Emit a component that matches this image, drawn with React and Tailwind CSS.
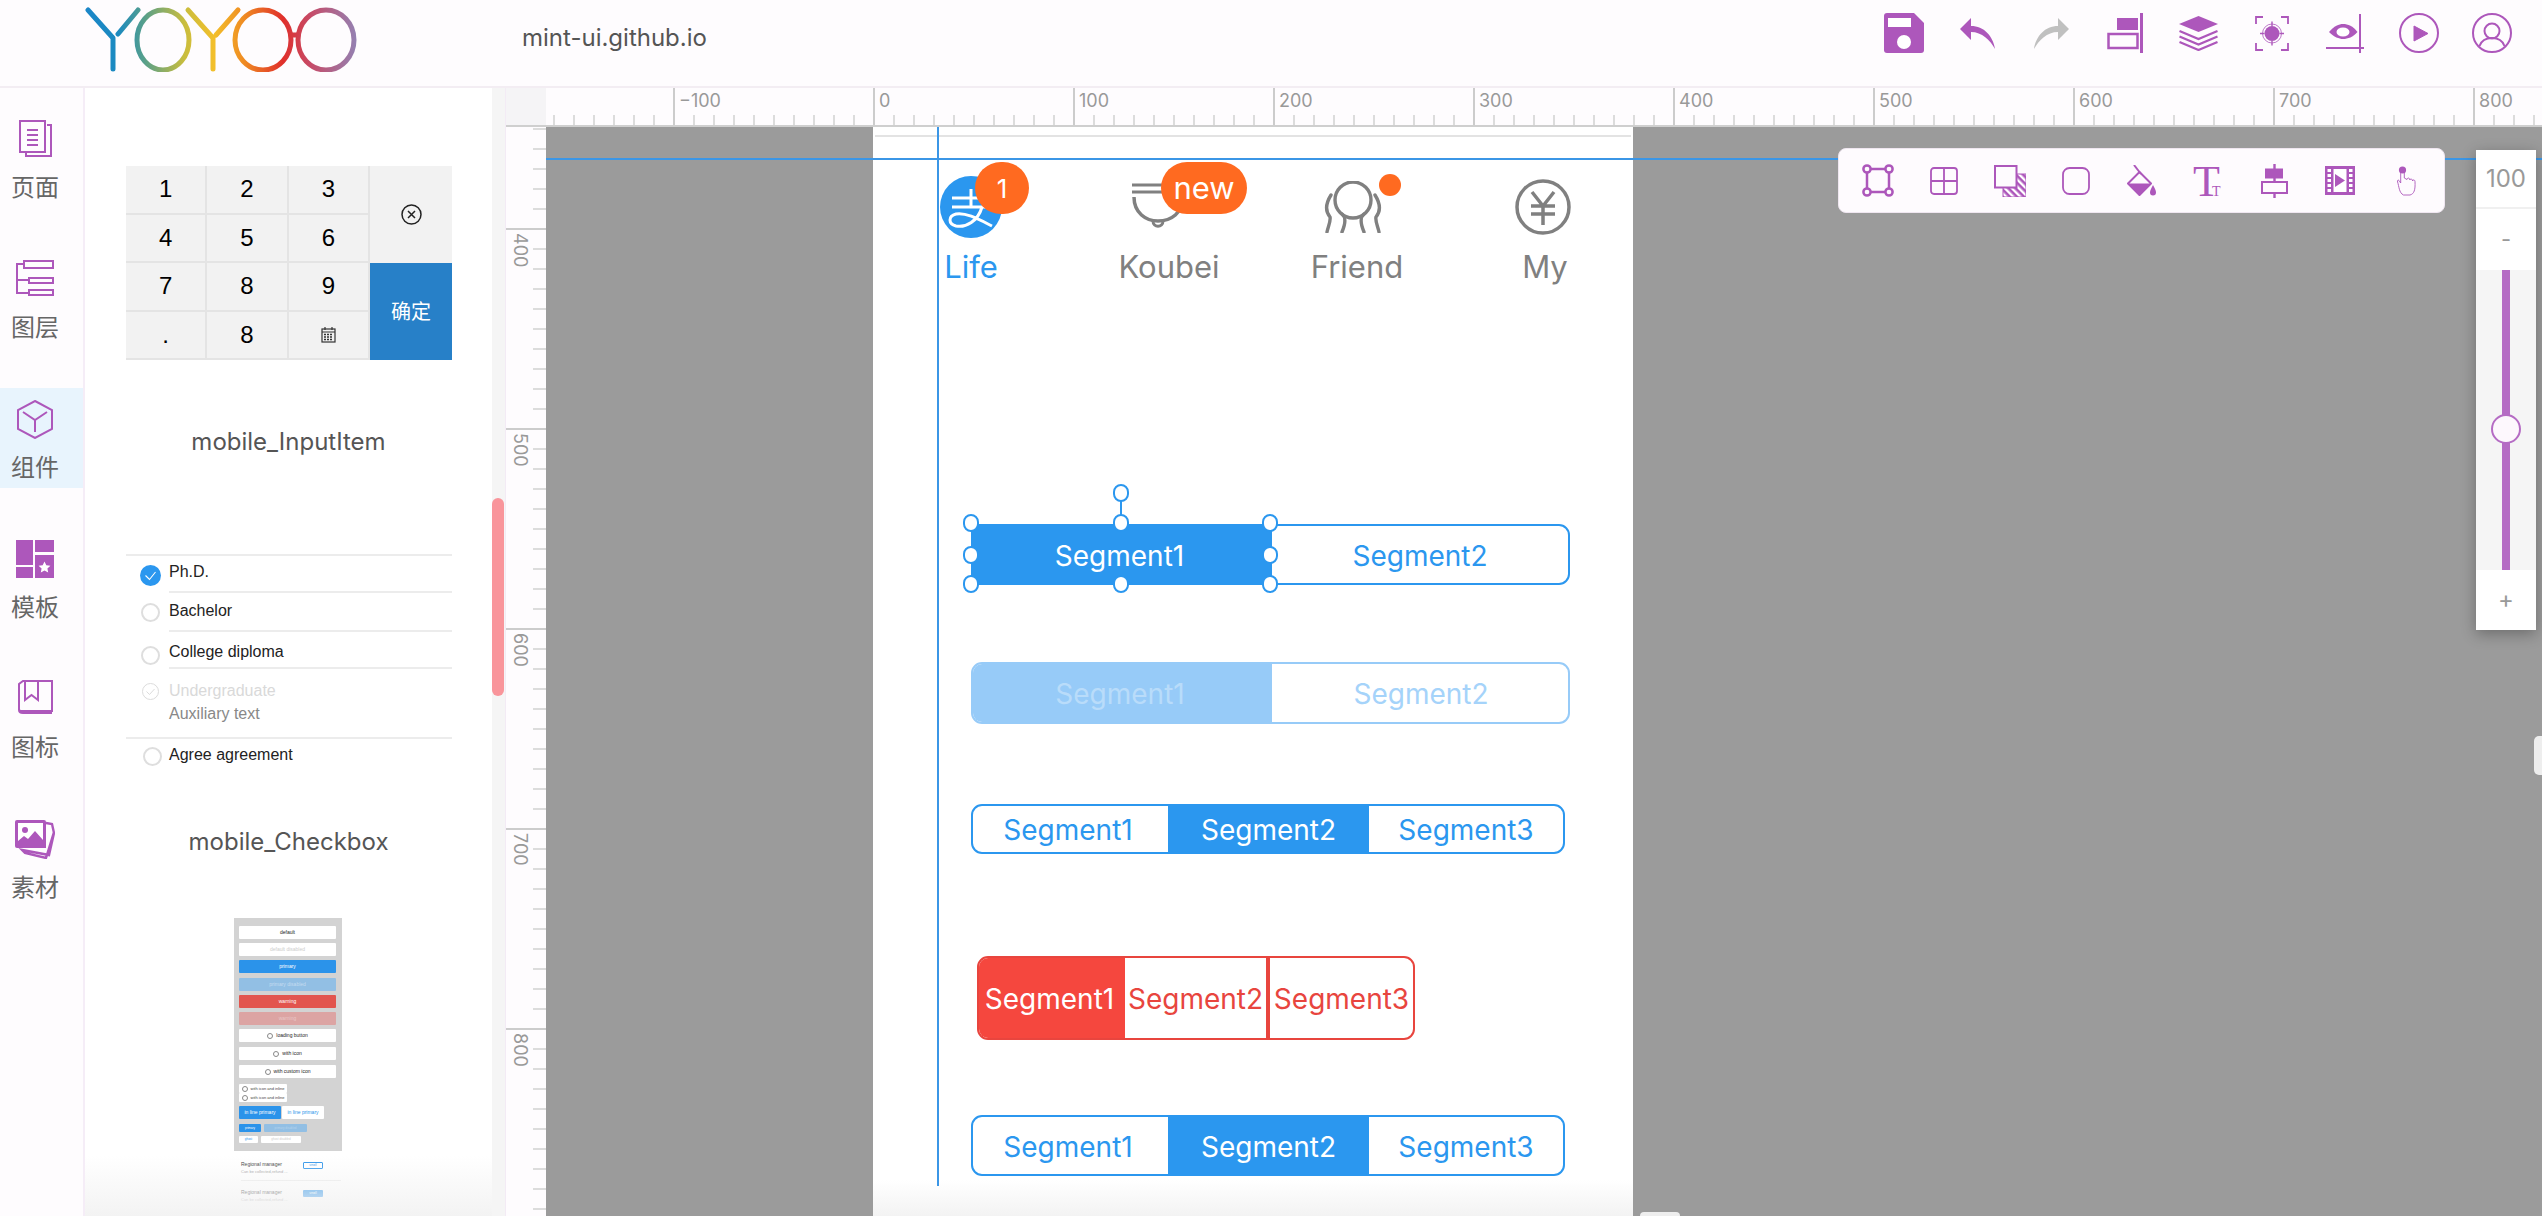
import React from "react";

const P = "#ad57bb";

function Logo() {
  return (
    <svg width="275" height="70" viewBox="0 0 275 70" fill="none" className="block">
      <defs>
        <linearGradient id="lg" gradientUnits="userSpaceOnUse" x1="0" y1="0" x2="275" y2="0">
          <stop offset="0" stopColor="#1b86c8" />
          <stop offset="0.12" stopColor="#1b8ac0" />
          <stop offset="0.22" stopColor="#5aa088" />
          <stop offset="0.36" stopColor="#c8bd3e" />
          <stop offset="0.47" stopColor="#f3bf2b" />
          <stop offset="0.58" stopColor="#ef8a22" />
          <stop offset="0.72" stopColor="#e02f2b" />
          <stop offset="0.82" stopColor="#c64b68" />
          <stop offset="1" stopColor="#9085b8" />
        </linearGradient>
      </defs>
      <g stroke="url(#lg)" strokeWidth="5" strokeLinecap="round" strokeLinejoin="round">
        <path d="M3 8 L28 36 V67 M53 8 L33 32" />
        <ellipse cx="78" cy="38" rx="26" ry="30" />
        <path d="M103 8 L128 36 V67 M153 8 L131 33" />
        <ellipse cx="178" cy="38" rx="28" ry="30" />
        <ellipse cx="241" cy="38" rx="28" ry="30" />
        <path d="M206 33 H213" />
      </g>
    </svg>
  );
}

const Save = () => (
  <svg width="40" height="40" viewBox="0 0 40 40">
    <path d="M3 0H30L40 10V37A3 3 0 0 1 37 40H3A3 3 0 0 1 0 37V3A3 3 0 0 1 3 0Z" fill={P} />
    <rect x="4" y="5" width="23" height="9" fill="#fff" />
    <circle cx="20" cy="29" r="7" fill="#fff" />
  </svg>
);
const Undo = ({ c = P, flip = false }) => (
  <svg width="35" height="31" viewBox="0 0 35 31" className={flip ? "-scale-x-100" : ""}>
    <path d="M0 11L11 0V8C24 8 33 18 35 31C30 22 22 14 11 14V22Z" fill={c} />
  </svg>
);
const AlignR = () => (
  <svg width="36" height="40" viewBox="0 0 36 40" fill="none">
    <rect x="10" y="5" width="21" height="12" fill={P} />
    <rect x="1.5" y="21" width="29" height="14" stroke={P} strokeWidth="2.5" />
    <path d="M34.5 0V40" stroke={P} strokeWidth="3" />
  </svg>
);
const Layers = () => (
  <svg width="39" height="35" viewBox="0 0 39 35" fill="none">
    <path d="M0 8L19.5 0L39 8L19.5 16Z" fill={P} />
    <path d="M0.5 15L19.5 23L38.5 15M0.5 20.5L19.5 28.5L38.5 20.5M0.5 26L19.5 34L38.5 26" stroke={P} strokeWidth="2.2" />
  </svg>
);
const Focus = () => (
  <svg width="34" height="35" viewBox="0 0 34 35" fill="none" stroke={P} strokeWidth="1.8">
    <path d="M1 8V1H8M26 1H33V8M1 27V34H8M26 34H33V27" />
    <circle cx="17" cy="17.5" r="7.5" fill={P} stroke="none" />
    <circle cx="17" cy="17.5" r="9.5" strokeWidth="0.8" />
    <path d="M17 5.5V10M17 25V29.5M5 17.5H9.5M24.5 17.5H29" strokeWidth="1.4" />
  </svg>
);
const EyeAxis = () => (
  <svg width="38" height="39" viewBox="0 0 38 39" fill="none">
    <path d="M34 0V39M0 34H38" stroke={P} strokeWidth="2" />
    <path d="M3 18C8 12 13 10 17 10C22 10 27 12 31.5 18C27 23 22 25 17 25C13 25 8 23 3 18Z" fill={P} />
    <ellipse cx="17" cy="18" rx="6.5" ry="4.5" fill="#fff" />
  </svg>
);
const PlayC = () => (
  <svg width="40" height="40" viewBox="0 0 40 40" fill="none">
    <circle cx="20" cy="20" r="19" stroke={P} strokeWidth="2" />
    <path d="M15 13V28L29 20.5Z" fill={P} stroke={P} strokeLinejoin="round" />
  </svg>
);
const UserC = () => (
  <svg width="40" height="40" viewBox="0 0 40 40" fill="none" stroke={P} strokeWidth="2">
    <circle cx="20" cy="20" r="19" />
    <circle cx="20" cy="18" r="7.5" />
    <path d="M7.5 33C9.5 27.5 14 25 20 25C26 25 30.5 27.5 32.5 33" />
  </svg>
);

const TShape = () => (
  <svg width="32" height="33" viewBox="0 0 32 33" fill="none" stroke={P} strokeWidth="2.5">
    <rect x="5" y="5" width="22" height="23" />
    {[[5, 5], [27, 5], [5, 28], [27, 28]].map(([x, y]) => (
      <circle key={x + "-" + y} cx={x} cy={y} r="3.6" fill="#fefbfe" />
    ))}
  </svg>
);
const TGrid = () => (
  <svg width="28" height="28" viewBox="0 0 28 28" fill="none" stroke={P} strokeWidth="1.8">
    <rect x="1" y="1" width="26" height="26" rx="3" />
    <path d="M14 1V27M1 14H27" />
  </svg>
);
const TOver = () => (
  <svg width="32" height="32" viewBox="0 0 32 32" fill="none">
    <defs>
      <pattern id="ht" width="5" height="5" patternUnits="userSpaceOnUse" patternTransform="rotate(45)">
        <rect width="5" height="5" fill="#fff" />
        <rect width="5" height="2.6" fill={P} />
      </pattern>
    </defs>
    <rect x="9" y="9" width="23" height="23" fill="url(#ht)" stroke={P} strokeWidth="1" />
    <rect x="1" y="1" width="21.5" height="21.5" fill="#fefbfe" stroke={P} strokeWidth="2" />
  </svg>
);
const TRound = () => (
  <svg width="28" height="28" viewBox="0 0 28 28" fill="none" stroke={P} strokeWidth="1.8">
    <rect x="1" y="1" width="26" height="26" rx="6.5" />
  </svg>
);
const TFill = () => (
  <svg width="30" height="31" viewBox="0 0 30 31" fill="none">
    <path d="M7 0L14 9" stroke={P} strokeWidth="2" />
    <path d="M12.5 7L24 18.5L12.5 30L1 18.5Z" stroke={P} strokeWidth="2" strokeLinejoin="round" />
    <path d="M1 18.5H24L12.5 30Z" fill={P} />
    <path d="M26 20C24 24 23 25.5 23 27.5A3 3 0 0 0 29 27.5C29 25.5 28 24 26 20Z" fill={P} />
  </svg>
);
const TText = () => (
  <svg width="30" height="50" viewBox="0 0 30 50">
    <text x="0" y="40" fontFamily="Liberation Serif" fontSize="44" fill={P}>T</text>
    <text x="19" y="40" fontFamily="Liberation Serif" fontSize="14" fill={P}>T</text>
  </svg>
);
const TAlign = () => (
  <svg width="27" height="34" viewBox="0 0 27 34" fill="none">
    <path d="M13.5 0V34" stroke={P} strokeWidth="2.4" />
    <rect x="4" y="4.5" width="18" height="10" fill={P} />
    <rect x="1" y="18" width="25" height="11" fill="#fefbfe" stroke={P} strokeWidth="2" />
  </svg>
);
const TFilm = () => (
  <svg width="30" height="29" viewBox="0 0 30 29">
    <rect width="30" height="29" fill={P} />
    <rect x="8.5" y="3" width="13" height="23" fill="#fff" />
    {[4, 9, 14, 19, 24].map((y) => (
      <g key={y}>
        <rect x="2.5" y={y - 1} width="3.5" height="3" fill="#fff" />
        <rect x="24" y={y - 1} width="3.5" height="3" fill="#fff" />
      </g>
    ))}
    <path d="M10 8V21L20 14.5Z" fill={P} />
  </svg>
);
const THand = () => (
  <svg width="19" height="30" viewBox="0 0 19 30" fill="none" stroke={P} strokeWidth="0.9">
    <circle cx="5.5" cy="4" r="3.6" fill={P} stroke="none" />
    <path d="M3.7 5V17L2 14.5C1 13.5 0 14.5 0.6 16C2 20 2 27 6.5 29H13C17 28 18.5 24 18 15.5C17.8 13.5 15.8 13.5 15.6 15C15.5 12.5 13 12.5 12.9 14C12.7 11.5 10.2 11.5 10 13.5L7.3 12V5" />
  </svg>
);

const IPage = () => (
  <svg width="33" height="37" viewBox="0 0 33 37" fill="none" stroke={P} strokeWidth="2">
    <rect x="1" y="1" width="25" height="31" />
    <path d="M28 5H32V36H7V32" />
    <path d="M8 10H19M8 15H19M8 20H19M8 25H19" />
  </svg>
);
const ILayer = () => (
  <svg width="38" height="37" viewBox="0 0 38 37" fill="none" stroke={P} strokeWidth="2">
    <rect x="8" y="1" width="29" height="7" />
    <rect x="13" y="18" width="24" height="5" />
    <rect x="13" y="30" width="24" height="5" />
    <path d="M8 4H1V33H13M1 20H13" />
  </svg>
);
const ICube = () => (
  <svg width="36" height="39" viewBox="0 0 36 39" fill="none" stroke={P} strokeWidth="2">
    <path d="M18 1L35 10V29L18 38L1 29V10Z" />
    <path d="M6 12L18 20L30 12M18 20V32" />
  </svg>
);
const ITemplate = () => (
  <svg width="38" height="38" viewBox="0 0 38 38" fill={P}>
    <rect x="0" y="0" width="17" height="25" />
    <rect x="0" y="27" width="17" height="11" />
    <rect x="19" y="0" width="19" height="12" />
    <rect x="19" y="15" width="19" height="23" />
    <path d="M28.5 21.5L30.3 25.3L34.4 25.8L31.4 28.6L32.2 32.6L28.5 30.6L24.8 32.6L25.6 28.6L22.6 25.8L26.7 25.3Z" fill="#fff" />
  </svg>
);
const IBook = () => (
  <svg width="35" height="34" viewBox="0 0 35 34" fill="none" stroke={P} strokeWidth="2">
    <path d="M1 30V4L5 1H34V31H5C2.5 31 1 30.5 1 30ZM1 30C1 32.5 3 33 5 33H34" />
    <path d="M7 1V20L13.5 15L20 20V1" />
  </svg>
);
const IAsset = () => (
  <svg width="40" height="39" viewBox="0 0 40 39">
    <path d="M31 3L37 4L39 13L34 35L7 30L10 33L31 38L39 12" fill="none" stroke={P} strokeWidth="2.4" />
    <path d="M2 0H29A2 2 0 0 1 31 2V28H2A2 2 0 0 1 0 26V2A2 2 0 0 1 2 0Z" fill={P} />
    <path d="M3 3H28V20L20 11L13 19L9 16L3 21Z" fill="#fff" />
    <circle cx="10" cy="10" r="3" fill={P} />
  </svg>
);

function RailItem({ icon, label, active }) {
  return (
    <div className={`h-[100px] ${active ? "bg-[#e8f4fd]" : ""}`}>
      <div className="w-[70px] flex flex-col items-center pt-[12px]">
        <div className="h-[39px] flex items-start justify-center">{icon}</div>
        <div className="mt-[14px] text-[24px] leading-[30px] text-[#666]">{label}</div>
      </div>
    </div>
  );
}

function Key({ children }) {
  return (
    <div className="flex items-center justify-center border-r-2 border-b-2 border-[#e4e4e4] text-[24px] text-black font-['Liberation_Sans']">
      {children}
    </div>
  );
}

function Keypad() {
  return (
    <div className="flex ml-[41px] mt-[78px] w-[326px] h-[194px] bg-[#f2f2f2]">
      <div className="w-[244px] grid grid-cols-3 grid-rows-4">
        {["1", "2", "3", "4", "5", "6", "7", "8", "9", ".", "8"].map((k, i) => (
          <Key key={i}>{k}</Key>
        ))}
        <Key>
          <svg width="17" height="17" viewBox="0 0 17 17" fill="none" stroke="#333" strokeWidth="1.2">
            <rect x="2" y="3" width="13" height="13" />
            <path d="M2 6H15M5 1V4M12 1V4" />
            <path d="M4 8.5H13M4 11H13M4 13.5H13" strokeWidth="1.5" strokeDasharray="2 1" />
          </svg>
        </Key>
      </div>
      <div className="flex-1 flex flex-col">
        <div className="h-[97px] flex items-center justify-center">
          <svg width="21" height="21" viewBox="0 0 21 21" fill="none" stroke="#222" strokeWidth="1.5">
            <circle cx="10.5" cy="10.5" r="9.5" />
            <path d="M7 7L14 14M14 7L7 14" />
          </svg>
        </div>
        <div className="h-[97px] bg-[#2780c8] text-white text-[20px] flex items-center justify-center">确定</div>
      </div>
    </div>
  );
}

function Radio({ size, kind }) {
  if (kind === "on")
    return (
      <svg width={size} height={size} viewBox="0 0 21 21" fill="none">
        <circle cx="10.5" cy="10.5" r="10.5" fill="#2b97ef" />
        <path d="M5.5 10.5L9.5 14.5L15.5 7" stroke="#fff" strokeWidth="1.1" />
      </svg>
    );
  if (kind === "dis")
    return (
      <svg width={size} height={size} viewBox="0 0 17 17" fill="none" stroke="#dcdcdc">
        <circle cx="8.5" cy="8.5" r="8" />
        <path d="M4.5 8.5L7.5 11.5L12.5 6" />
      </svg>
    );
  return <div style={{ width: size, height: size }} className="rounded-full border-2 border-[#dedede]" />;
}

function ListRow({ h, circle, text, size, kind, cx = 24, label, dim, last }) {
  return (
    <div style={{ height: h }} className="flex">
      <div className="w-[45px] shrink-0" style={{ paddingTop: circle, paddingLeft: cx - size / 2 }}>
        <Radio size={size} kind={kind} />
      </div>
      <div className={`flex-1 -ml-[2px] ${last ? "" : "border-b-2 border-[#ececec]"}`} style={{ paddingTop: text }}>
        <div className={`text-[16px] leading-[20px] font-['Liberation_Sans'] ${dim ? "text-[#d9d9d9]" : "text-[#222]"}`}>{label}</div>
        {dim && <div className="mt-[3px] text-[16px] leading-[20px] font-['Liberation_Sans'] text-[#888]">Auxiliary text</div>}
      </div>
    </div>
  );
}

function Checklist() {
  return (
    <div className="ml-[41px] w-[326px] mt-[96px]">
      <div className="border-t-2 border-[#ececec]" />
      <ListRow h={37} circle={9} text={6} size={21} kind="on" label="Ph.D." />
      <ListRow h={39} circle={10} text={8} size={19} label="Bachelor" />
      <ListRow h={37} circle={14} text={10} size={19} label="College diploma" />
      <ListRow h={68} circle={14} text={12} size={17} kind="dis" label="Undergraduate" dim last />
      <div className="border-t-2 border-[#ececec]" />
      <ListRow h={38} circle={8} text={6} size={19} cx={26} label="Agree agreement" last />
    </div>
  );
}

function Btn({ w = 97, h = 13, mt = 4, ml = 5, bg = "bg-white", color = "text-[#222]", children }) {
  return (
    <div style={{ width: w, height: h, marginTop: mt, marginLeft: ml }} className={`${bg} ${color} rounded-[1px] text-[5px] leading-none flex items-center justify-center font-['Liberation_Sans'] whitespace-nowrap`}>
      {children}
    </div>
  );
}
const Spin = () => <span className="inline-block w-[6px] h-[6px] rounded-full border border-[#888] mr-[3px]" />;

function Thumb() {
  return (
    <div className="ml-[149px] mt-[60px] w-[108px]">
      <div className="h-[233px] bg-[#d3d3d3] pt-[8px]">
        <Btn mt={0}>default</Btn>
        <Btn color="text-[#ccc]">default disabled</Btn>
        <Btn bg="bg-[#2b93ea]" color="text-white">primary</Btn>
        <Btn bg="bg-[#92bfe4]" color="text-[#c5dcf0]" mt={5}>primary disabled</Btn>
        <Btn bg="bg-[#e2554e]" color="text-white">warning</Btn>
        <Btn bg="bg-[#dca4a3]" color="text-[#e8c6c6]">warning</Btn>
        <Btn><Spin />loading button</Btn>
        <Btn mt={5}><Spin />with icon</Btn>
        <Btn mt={5}><Spin />with custom icon</Btn>
        <Btn w={48} h={9} mt={6} color="text-[#444]"><Spin /><span className="text-[4px]">with icon and inline</span></Btn>
        <Btn w={48} h={9} mt={0} color="text-[#444]"><Spin /><span className="text-[4px]">with icon and inline</span></Btn>
        <div className="flex ml-[5px] mt-[4px] gap-[1px]">
          <Btn w={42} mt={0} ml={0} bg="bg-[#2b93ea]" color="text-white">in line primary</Btn>
          <Btn w={42} mt={0} ml={0} color="text-[#2b93ea]">in line primary</Btn>
        </div>
        <div className="flex ml-[5px] mt-[5px] gap-[3px]">
          <Btn w={22} h={8} mt={0} ml={0} bg="bg-[#2b93ea]" color="text-white"><span className="text-[3px]">primary</span></Btn>
          <Btn w={43} h={8} mt={0} ml={0} bg="bg-[#92bfe4]" color="text-[#b5d3ec]"><span className="text-[3px]">primary disabled</span></Btn>
        </div>
        <div className="flex ml-[5px] mt-[4px] gap-[3px]">
          <Btn w={19} h={7} mt={0} ml={0} color="text-[#2b93ea]"><span className="text-[3px]">ghost</span></Btn>
          <Btn w={40} h={7} mt={0} ml={0} color="text-[#ccc]"><span className="text-[3px]">ghost disabled</span></Btn>
        </div>
      </div>
      <div className="ml-[7px] w-[100px] mt-[10px] pb-[5px] border-b border-[#ececec] flex justify-between pr-[18px]">
        <div className="font-['Liberation_Sans']">
          <div className="text-[5px] leading-[7px] text-[#333]">Regional manager</div>
          <div className="text-[4px] leading-[6px] mt-[1px] text-[#999]">Can be collected,refund ...</div>
        </div>
        <div className="w-[20px] h-[7px] border border-[#2b93ea] rounded-[1px] mt-[1px] text-[3px] leading-[5px] text-center text-[#2b93ea]">small</div>
      </div>
      <div className="ml-[7px] w-[100px] mt-[8px] flex justify-between pr-[18px]">
        <div className="font-['Liberation_Sans']">
          <div className="text-[5px] leading-[7px] text-[#333]">Regional manager</div>
          <div className="text-[4px] leading-[6px] mt-[1px] text-[#999]">Can be collected,refund ...</div>
        </div>
        <div className="w-[20px] h-[7px] bg-[#2b93ea] rounded-[1px] mt-[1px] text-[3px] leading-[7px] text-center text-white">small</div>
      </div>
    </div>
  );
}

function TopRuler() {
  const labels = ["−100", "0", "100", "200", "300", "400", "500", "600", "700", "800"];
  const ticks = (n) => Array.from({ length: n }).map((_, i) => <div key={i} className="w-[20px] h-[10px] border-l-2 border-[#dcdcdc] shrink-0" />);
  return (
    <div className="h-[39px] flex border-b-2 border-[#cfcfcf] bg-[#fefcfe] overflow-hidden">
      <div className="w-[127px] shrink-0 flex items-end pl-[7px]">{ticks(6)}</div>
      {labels.map((l) => (
        <div key={l} className="w-[200px] shrink-0 border-l-2 border-[#cccccc] flex flex-col">
          <div className="h-[27px] pl-[4px] pt-[2px] text-[18px] leading-[22px] text-[#999]">{l}</div>
          <div className="flex pl-[18px]">{ticks(9)}</div>
        </div>
      ))}
    </div>
  );
}

function SideRuler() {
  const labels = ["400", "500", "600", "700", "800"];
  const ticks = (n) => Array.from({ length: n }).map((_, i) => <div key={i} className="h-[20px] w-[13px] border-t-2 border-[#dcdcdc] shrink-0" />);
  return (
    <div className="w-[41px] shrink-0 h-full flex flex-col bg-[#fefcfe] border-l border-[#f3ebf5] overflow-hidden">
      <div className="h-[39px] shrink-0 bg-[#f5f4f6] border-b-2 border-[#cfcfcf]" />
      <div className="h-[101px] shrink-0 flex flex-col items-end pt-[1px]">{ticks(5)}</div>
      {labels.map((l) => (
        <div key={l} className="h-[200px] shrink-0 border-t-2 border-[#cccccc] flex">
          <div className="w-[27px] flex justify-center pt-[3px]">
            <span className="[writing-mode:vertical-rl] text-[18px] leading-[18px] text-[#999] h-[36px]">{l}</span>
          </div>
          <div className="w-[13px] flex flex-col pt-[18px]">{ticks(9)}</div>
        </div>
      ))}
    </div>
  );
}

function Toolbar() {
  const icons = [<TShape />, <TGrid />, <TOver />, <TRound />, <TFill />, <TText />, <TAlign />, <TFilm />, <THand />];
  return (
    <div className="absolute left-[1292px] top-[21px] w-[607px] h-[65px] bg-[#fefbfe] rounded-[8px] border border-[#efe6f0] flex items-center pl-[6px]">
      {icons.map((ic, i) => (
        <div key={i} className="w-[66px] flex items-center justify-center">{ic}</div>
      ))}
    </div>
  );
}

function ZoomPanel() {
  return (
    <div className="absolute left-[1930px] top-[23px] w-[60px] h-[480px] bg-white shadow-[0_4px_14px_rgba(0,0,0,0.3)] flex flex-col items-center text-[#999]">
      <div className="h-[59px] w-full flex items-center justify-center text-[24px] border-b-2 border-[#f0f0f0]">100</div>
      <div className="h-[61px] flex items-center justify-center text-[22px]">-</div>
      <div className="h-[300px] w-full bg-[#f5f5f5] flex justify-center relative">
        <div className="w-[8px] h-full bg-[#b56cc4]" />
        <div className="absolute top-[144px] left-[15px] w-[30px] h-[30px] rounded-full bg-[#fdf8fd] border-2 border-[#b56cc4]" />
      </div>
      <div className="h-[60px] flex items-center justify-center text-[24px]">+</div>
    </div>
  );
}

const Handle = ({ className }) => (
  <div className={`absolute w-[16px] h-[18px] rounded-full bg-white border-2 border-[#2b97ef] ${className}`} />
);

function Tabs() {
  return (
    <div className="flex mt-[39px]">
      <div className="w-[196px] shrink-0 flex flex-col items-center relative">
        <div className="h-[62px] flex items-center">
          <svg width="62" height="62" viewBox="0 0 62 62" fill="none">
            <circle cx="31" cy="31" r="31" fill="#2b97ef" />
            <path d="M12 22H50M12 31H50M31 13V31M42 31C38 45 26 52 16 50C8 48 8 40 16 38C26 36 40 44 52 50" stroke="#fff" strokeWidth="3" />
          </svg>
        </div>
        <div className="mt-[10px] h-[38px] text-[31px] leading-[38px] text-[#2b97ef]">Life</div>
        <div className="absolute left-[102px] -top-[14px] w-[54px] h-[52px] rounded-full bg-[#ff6a20] text-white text-[26px] flex items-center justify-center">1</div>
      </div>
      <div className="w-[200px] shrink-0 flex flex-col items-center relative">
        <div className="h-[62px] flex items-center mr-[21px]">
          <svg width="56" height="48" viewBox="0 0 56 48" fill="none" stroke="#808080" strokeWidth="3">
            <path d="M1 2H40M1 9H40" />
            <path d="M3 14C3 30 15 38 27 38C40 38 52 30 52 14" strokeWidth="3.5" />
            <path d="M22 38C22 45 32 45 32 38" />
          </svg>
        </div>
        <div className="mt-[10px] h-[38px] text-[31px] leading-[38px] text-[#808080]">Koubei</div>
        <div className="absolute left-[92px] -top-[14px] w-[86px] h-[52px] rounded-[26px] bg-[#ff6a20] text-white text-[31px] flex items-center justify-center">new</div>
      </div>
      <div className="w-[176px] shrink-0 flex flex-col items-center relative">
        <div className="h-[62px] flex items-center mr-[8px]">
          <svg width="60" height="52" viewBox="0 0 60 52" fill="none" stroke="#808080" strokeWidth="3.4" strokeLinecap="round">
            <ellipse cx="30" cy="19" rx="18" ry="18" />
            <path d="M8 14C3 22 2 30 7 36C8 40 5 46 4 51M52 14C57 22 58 30 53 36C52 40 55 46 56 51" />
            <path d="M19 33C24 37 22 44 19 51M41 33C36 37 38 44 41 51" />
          </svg>
        </div>
        <div className="mt-[10px] h-[38px] text-[31px] leading-[38px] text-[#808080]">Friend</div>
        <div className="absolute left-[110px] -top-[2px] w-[22px] h-[22px] rounded-full bg-[#ff6a20]" />
      </div>
      <div className="w-[200px] shrink-0 flex flex-col items-center">
        <div className="h-[62px] flex items-center mr-[4px]">
          <svg width="56" height="56" viewBox="0 0 56 56" fill="none" stroke="#808080" strokeWidth="3.5">
            <circle cx="28" cy="28" r="26" />
            <path d="M17 13L28 27L39 13M16 27H40M16 35H40M28 27V46" />
          </svg>
        </div>
        <div className="mt-[10px] h-[38px] text-[31px] leading-[38px] text-[#808080]">My</div>
      </div>
    </div>
  );
}

function Seg({ w, h, ml, mt, items, color = "border-[#2b97ef]", children }) {
  return (
    <div style={{ width: w, height: h, marginLeft: ml, marginTop: mt }} className={`relative flex border-2 ${color} rounded-[11px] text-[28px]`}>
      {items}
      {children}
    </div>
  );
}
const Cell = ({ w, cls, label, extra = "pt-[2px]" }) => (
  <div style={{ width: w }} className={`shrink-0 flex items-center justify-center ${cls} ${extra}`}>{label}</div>
);

function Artboard() {
  const B = "bg-[#2b97ef] text-white";
  const T = "text-[#2b97ef]";
  const three = (
    <>
      <Cell w={195} cls={T} label="Segment1" extra="pt-[2px] pr-[5px]" />
      <Cell w={201} cls={B} label="Segment2" />
      <Cell w={194} cls={T} label="Segment3" />
    </>
  );
  return (
    <div className="ml-[327px] w-[760px] h-full bg-white relative overflow-hidden">
      <div className="mt-[8px] mx-[2px] h-[2px] bg-[#e3e3e3]" />
      <Tabs />
      <Seg w={599} h={61} ml={98} mt={238} items={
        <>
          <Cell w={301} cls={B} label="Segment1" extra="-ml-[2px] -my-[2px] h-[61px] pt-[2px] pr-[4px]" />
          <Cell w={296} cls={T} label="Segment2" />
        </>
      }>
        <div className="absolute left-[147px] -top-[30px] w-[2px] h-[30px] bg-[#2b97ef]" />
        <Handle className="left-[140px] -top-[42px]" />
        <Handle className="-left-[10px] -top-[12px]" />
        <Handle className="left-[140px] -top-[12px]" />
        <Handle className="left-[289px] -top-[12px]" />
        <Handle className="-left-[10px] top-[20px]" />
        <Handle className="left-[289px] top-[20px]" />
        <Handle className="-left-[10px] top-[49px]" />
        <Handle className="left-[140px] top-[49px]" />
        <Handle className="left-[289px] top-[49px]" />
      </Seg>
      <Seg w={599} h={62} ml={98} mt={77} color="border-[#97cbf8]" items={
        <>
          <Cell w={299} cls="bg-[#97cbf8] text-[#b9dcfa] rounded-l-[9px]" label="Segment1" extra="pt-[2px] pr-[5px]" />
          <Cell w={296} cls="text-[#a5d3fa]" label="Segment2" extra="pt-[2px] pl-[2px]" />
        </>
      } />
      <Seg w={594} h={50} ml={98} mt={80} items={three} />
      <Seg w={438} h={84} ml={104} mt={102} color="border-[#e8453e]" items={
        <>
          <Cell w={146} cls="bg-[#f5473e] text-white rounded-l-[9px]" label="Segment1" extra="pt-[2px] pr-[5px]" />
          <Cell w={145} cls="text-[#e8453e] border-r-[4px] border-[#e8453e]" label="Segment2" />
          <Cell w={143} cls="text-[#e8453e]" label="Segment3" />
        </>
      } />
      <Seg w={594} h={61} ml={98} mt={75} items={three} />
      <div className="absolute left-0 right-0 bottom-0 h-[36px] bg-linear-to-b from-transparent to-[#f3f3f3]" />
    </div>
  );
}

export default function App() {
  const topIcons = [<Save />, <Undo />, <Undo c="#c0c0c0" flip />, <AlignR />, <Layers />, <Focus />, <EyeAxis />, <PlayC />, <UserC />];
  return (
    <div className="relative w-[2542px] h-[1216px] overflow-hidden flex flex-col bg-white font-[family-name:Inter,'Noto_Sans_CJK_SC',sans-serif]">
      <header className="h-[88px] shrink-0 border-b-2 border-[#f3edf3] bg-[#fefcfe] flex items-start">
        <div className="ml-[85px] mt-[2px]"><Logo /></div>
        <div className="ml-[162px] mt-[21px] text-[24px] leading-[34px] text-[#555]">mint-ui.github.io</div>
        <div className="ml-auto mr-[13px] mt-[13px] flex items-start">
          {topIcons.map((ic, i) => (
            <div key={i} className="w-[73.5px] h-[40px] flex items-center justify-center">{ic}</div>
          ))}
        </div>
      </header>
      <div className="flex-1 flex min-h-0">
        <nav className="w-[85px] shrink-0 bg-[#fefcfe] border-r-2 border-[#f5edf7] pt-[20px] flex flex-col gap-[40px]">
          <RailItem icon={<IPage />} label="页面" />
          <RailItem icon={<ILayer />} label="图层" />
          <RailItem icon={<ICube />} label="组件" active />
          <RailItem icon={<ITemplate />} label="模板" />
          <RailItem icon={<IBook />} label="图标" />
          <RailItem icon={<IAsset />} label="素材" />
        </nav>
        <aside className="relative w-[407px] shrink-0 bg-white overflow-hidden">
          <Keypad />
          <div className="mt-[66px] h-[32px] text-center text-[24px] leading-[32px] text-[#555]">mobile_InputItem</div>
          <Checklist />
          <div className="mt-[49px] h-[32px] text-center text-[24px] leading-[32px] text-[#555]">mobile_Checkbox</div>
          <Thumb />
          <div className="absolute left-0 right-0 bottom-0 h-[60px] bg-linear-to-b from-transparent to-[#f3f3f3]" />
        </aside>
        <div className="w-[13px] shrink-0 bg-[#f5f5f5] pt-[410px]">
          <div className="w-[12px] h-[198px] rounded-[6px] bg-[#f9959b]" />
        </div>
        <SideRuler />
        <main className="flex-1 min-w-0 flex flex-col">
          <TopRuler />
          <div className="relative flex-1 bg-[#9b9b9b] min-h-0">
            <Artboard />
            <div className="absolute left-0 right-0 top-[31px] h-[2px] bg-[#3b96e6]" />
            <div className="absolute left-[391px] top-0 h-[1059px] w-[2px] bg-[#3b96e6]" />
            <Toolbar />
            <ZoomPanel />
            <div className="absolute right-0 top-[609px] w-[8px] h-[39px] rounded-l-[5px] bg-[#eeeeee]" />
            <div className="absolute left-[1094px] bottom-0 w-[40px] h-[4px] rounded-t-[5px] bg-[#eeeeee]" />
          </div>
        </main>
      </div>
    </div>
  );
}
